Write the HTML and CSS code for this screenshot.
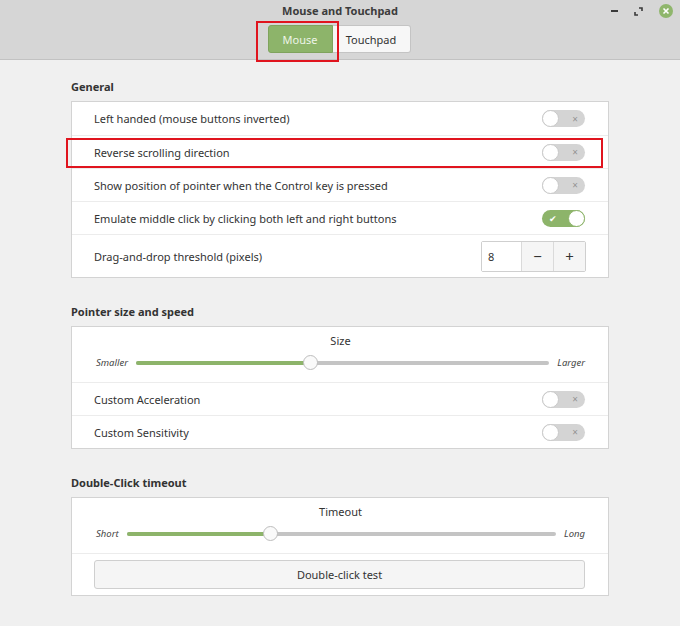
FILE: index.html
```html
<!DOCTYPE html>
<html>
  <head>
    <title>Mouse and Touchpad</title>
    <link rel="stylesheet" href="styles.css">
  </head>
  <body>
    <div class="window">
      <div class="header">
        <div class="title">Mouse and Touchpad</div>
        <div class="wm-buttons">
          <span class="wm-min"></span>
          <svg class="wm-max" width="9" height="9" viewBox="0 0 9 9">
            <path d="M5 1h3v3M4 8H1V5" fill="none" stroke="#3a3a3a" stroke-width="1.6"/>
          </svg>
          <svg class="wm-close" width="14" height="14" viewBox="0 0 14 14">
            <circle cx="7" cy="7" r="7" fill="#8fb66c"/>
            <path d="M4.5 4.5l5 5M9.5 4.5l-5 5" stroke="#fff" stroke-width="1.6"/>
          </svg>
        </div>
        <div class="stack-switcher">
          <button class="tab active">Mouse</button>
          <button class="tab">Touchpad</button>
        </div>
      </div>

      <div class="content">
        <div class="section">
          <div class="section-title">General</div>
          <div class="card">
            <div class="row">
              <span>Left handed (mouse buttons inverted)</span>
              <span class="switch"><span class="knob"></span><span class="mark">&#215;</span></span>
            </div>
            <div class="row">
              <span>Reverse scrolling direction</span>
              <span class="switch"><span class="knob"></span><span class="mark">&#215;</span></span>
            </div>
            <div class="row">
              <span>Show position of pointer when the Control key is pressed</span>
              <span class="switch"><span class="knob"></span><span class="mark">&#215;</span></span>
            </div>
            <div class="row">
              <span>Emulate middle click by clicking both left and right buttons</span>
              <span class="switch on"><span class="mark">&#10004;</span><span class="knob"></span></span>
            </div>
            <div class="row tall">
              <span>Drag-and-drop threshold (pixels)</span>
              <div class="spin">
                <div class="spin-value">8</div>
                <div class="spin-btn">&#8722;</div>
                <div class="spin-btn">+</div>
              </div>
            </div>
          </div>
        </div>

        <div class="section">
          <div class="section-title">Pointer size and speed</div>
          <div class="card">
            <div class="slider-row">
              <div class="slider-label">Size</div>
              <div class="slider-line">
                <span class="end">Smaller</span>
                <div class="track"><div class="fill" style="width: 42%"></div><div class="thumb" style="left: 42%"></div></div>
                <span class="end">Larger</span>
              </div>
            </div>
            <div class="row">
              <span>Custom Acceleration</span>
              <span class="switch"><span class="knob"></span><span class="mark">&#215;</span></span>
            </div>
            <div class="row">
              <span>Custom Sensitivity</span>
              <span class="switch"><span class="knob"></span><span class="mark">&#215;</span></span>
            </div>
          </div>
        </div>

        <div class="section">
          <div class="section-title">Double-Click timeout</div>
          <div class="card">
            <div class="slider-row">
              <div class="slider-label">Timeout</div>
              <div class="slider-line">
                <span class="end">Short</span>
                <div class="track"><div class="fill" style="width: 33.5%"></div><div class="thumb" style="left: 33.5%"></div></div>
                <span class="end">Long</span>
              </div>
            </div>
            <div class="button-row">
              <button class="test-btn">Double-click test</button>
            </div>
          </div>
        </div>
      </div>

      <!-- annotation boxes -->
      <div class="highlight hl-tab"></div>
      <div class="highlight hl-row"></div>
    </div>
  </body>
</html>
```

FILE: styles.css
```css
body {
  margin: 0;
  font-family: "Noto Sans", sans-serif;
  font-size: 11px;
  color: #333;
  background-color: #f0f0f0;
}
.window {
  position: relative;
  width: 680px;
  height: 626px;
  background: #f0f0f0;
}
.header {
  position: relative;
  height: 59px;
  background: #d6d6d6;
  border-bottom: 1px solid #c2c2c2;
  display: flex;
  flex-direction: column;
  align-items: center;
}
.title {
  font-weight: bold;
  color: #3c3c3c;
  margin-top: 3px;
  line-height: 16px;
}
.wm-buttons {
  position: absolute;
  top: 4px;
  right: 7px;
  display: flex;
  align-items: center;
  gap: 16px;
}
.wm-min {
  display: block;
  width: 7px;
  height: 2px;
  background: #3a3a3a;
}
.stack-switcher {
  display: flex;
  margin-top: 6px;
  margin-right: 2px;
}
.tab {
  font-family: inherit;
  font-size: 11px;
  height: 28px;
  width: 78px;
  padding: 0;
  border: 1px solid #c4c4c4;
  background: #f7f7f7;
  color: #333;
  margin: 0;
}
.tab + .tab {
  border-left: none;
  border-radius: 0 3px 3px 0;
}
.tab.active {
  width: 65px;
  background: #8db46a;
  border-color: #7fa35d;
  color: #eef4e8;
  border-radius: 3px 0 0 3px;
}
.content {
  padding: 19px 71px 0;
}
.section + .section {
  margin-top: 26px;
}
.section-title {
  font-weight: bold;
  line-height: 16px;
  margin-bottom: 6px;
  color: #333;
}
.card {
  background: #fff;
  border: 1px solid #d3d3d3;
}
.row {
  display: flex;
  align-items: center;
  justify-content: space-between;
  height: 32px;
  padding: 0 23px 0 22px;
  border-top: 1px solid #ececec;
}
.row:first-child {
  border-top: none;
  height: 33px;
}
.row.tall {
  height: 42px;
}
.switch {
  display: flex;
  align-items: center;
  justify-content: space-between;
  width: 43px;
  height: 17px;
  border-radius: 9px;
  background: #d4d4d4;
  box-sizing: border-box;
}
.switch .knob {
  width: 17px;
  height: 17px;
  border-radius: 50%;
  background: #fff;
  box-sizing: border-box;
  border: 1px solid #c9c9c9;
}
.switch .mark {
  font-size: 10px;
  color: #959595;
  margin-right: 7px;
  line-height: 1;
}
.switch.on {
  background: #8db46a;
}
.switch.on .mark {
  color: #fff;
  font-size: 9px;
  margin: 0 0 0 7px;
}
.switch.on .knob {
  border-color: #8db46a;
}
.spin {
  display: flex;
  height: 29px;
  border: 1px solid #cfcfcf;
  border-radius: 2px;
  margin-right: -1px;
}
.spin-value {
  width: 33px;
  padding-left: 6px;
  line-height: 29px;
  background: #fff;
}
.spin-btn {
  width: 31px;
  line-height: 29px;
  text-align: center;
  border-left: 1px solid #dadada;
  background: #f5f5f5;
  font-size: 15px;
  color: #333;
}
.slider-row {
  height: 55px;
  padding: 6px 23px 0 24px;
  box-sizing: border-box;
}
.slider-label {
  text-align: center;
  line-height: 16px;
}
.slider-line {
  display: flex;
  align-items: center;
  gap: 8px;
  margin-top: 7px;
}
.end {
  font-style: italic;
  font-size: 9.5px;
  color: #444;
}
.track {
  position: relative;
  flex: 1;
  height: 4px;
  border-radius: 2px;
  background: #c4c4c4;
}
.fill {
  height: 4px;
  border-radius: 2px;
  background: #8db46a;
}
.thumb {
  position: absolute;
  top: -6px;
  width: 15px;
  height: 15px;
  margin-left: -7px;
  border-radius: 50%;
  background: #fafafa;
  border: 1px solid #bdbdbd;
  box-sizing: border-box;
}
.button-row {
  padding: 6px 23px 6px 22px;
  border-top: 1px solid #ececec;
}
.test-btn {
  display: block;
  width: 100%;
  height: 29px;
  font-family: inherit;
  font-size: 11px;
  color: #333;
  background: #f5f5f5;
  border: 1px solid #cfcfcf;
  border-radius: 3px;
}
.highlight {
  position: absolute;
  border: 2px solid #e0141e;
  box-sizing: border-box;
}
.hl-tab {
  left: 256px;
  top: 21px;
  width: 83px;
  height: 41px;
}
.hl-row {
  left: 66px;
  top: 138px;
  width: 537px;
  height: 30px;
}
```
